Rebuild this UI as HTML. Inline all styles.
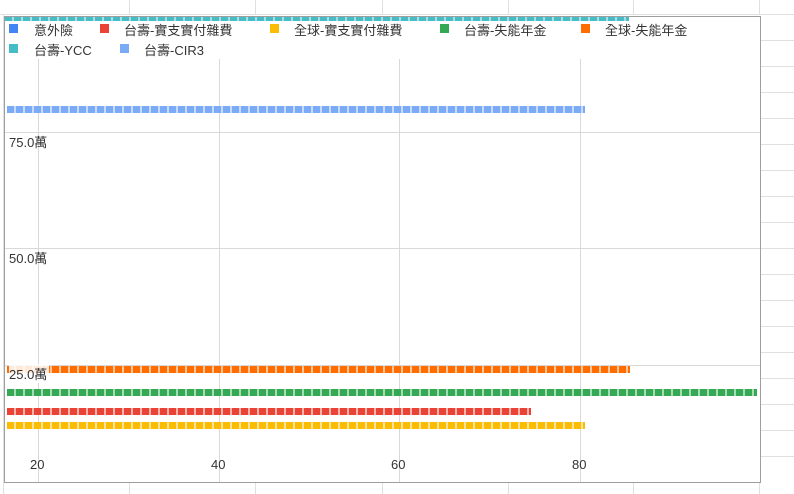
<!DOCTYPE html>
<html><head><meta charset="utf-8"><style>
body{margin:0;width:794px;height:494px;overflow:hidden;background:#fff;font-family:"Liberation Sans","Noto Sans CJK TC",sans-serif;position:relative}
.a{position:absolute}
.gv{position:absolute;width:1px;background:#e0e0e0}
.gh{position:absolute;height:1px;background:#e0e0e0}
.d{position:absolute;height:7px}
.t{position:absolute;font-size:13px;color:#333;white-space:nowrap}
.sq{position:absolute;width:9px;height:9px}
</style></head><body>
<div class="gh" style="left:0;top:14px;width:794px"></div>
<div class="gv" style="left:129px;top:0;height:14px"></div>
<div class="gv" style="left:255px;top:0;height:14px"></div>
<div class="gv" style="left:382px;top:0;height:14px"></div>
<div class="gv" style="left:508px;top:0;height:14px"></div>
<div class="gv" style="left:633px;top:0;height:14px"></div>
<div class="gv" style="left:759px;top:0;height:14px"></div>
<div class="gh" style="left:760px;top:40px;width:34px"></div>
<div class="gh" style="left:760px;top:66px;width:34px"></div>
<div class="gh" style="left:760px;top:92px;width:34px"></div>
<div class="gh" style="left:760px;top:118px;width:34px"></div>
<div class="gh" style="left:760px;top:144px;width:34px"></div>
<div class="gh" style="left:760px;top:170px;width:34px"></div>
<div class="gh" style="left:760px;top:196px;width:34px"></div>
<div class="gh" style="left:760px;top:222px;width:34px"></div>
<div class="gh" style="left:760px;top:248px;width:34px"></div>
<div class="gh" style="left:760px;top:274px;width:34px"></div>
<div class="gh" style="left:760px;top:300px;width:34px"></div>
<div class="gh" style="left:760px;top:326px;width:34px"></div>
<div class="gh" style="left:760px;top:352px;width:34px"></div>
<div class="gh" style="left:760px;top:378px;width:34px"></div>
<div class="gh" style="left:760px;top:404px;width:34px"></div>
<div class="gh" style="left:760px;top:430px;width:34px"></div>
<div class="gh" style="left:760px;top:456px;width:34px"></div>
<div class="gv" style="left:129px;top:483px;height:11px"></div>
<div class="gv" style="left:255px;top:483px;height:11px"></div>
<div class="gv" style="left:382px;top:483px;height:11px"></div>
<div class="gv" style="left:508px;top:483px;height:11px"></div>
<div class="gv" style="left:633px;top:483px;height:11px"></div>
<div class="gv" style="left:759px;top:483px;height:11px"></div>
<div class="gv" style="left:3px;top:14px;height:480px"></div>
<div class="a" style="left:4px;top:16px;width:755px;height:465px;border:1px solid #9e9e9e;background:#fff;overflow:hidden">
 <div class="gv" style="left:33px;top:0;height:465px;background:#d9d9d9"></div>
 <div class="gv" style="left:214px;top:0;height:465px;background:#d9d9d9"></div>
 <div class="gv" style="left:394px;top:0;height:465px;background:#d9d9d9"></div>
 <div class="gv" style="left:575px;top:0;height:465px;background:#d9d9d9"></div>
 <div class="gh" style="left:0;top:115px;width:755px;background:#d9d9d9"></div>
 <div class="gh" style="left:0;top:231px;width:755px;background:#d9d9d9"></div>
 <div class="gh" style="left:0;top:348px;width:755px;background:#d9d9d9"></div>
 <div style="position:absolute;left:0;top:4px;width:755px;height:38px;background:#fff"></div>
 <div class="d" style="left:0;top:-3px;width:624px;background:repeating-linear-gradient(90deg,#46bdc6 0 7px,#a8dde1 7px 9px)"></div>
 <div class="d" style="left:2px;top:89px;width:578px;background:repeating-linear-gradient(90deg,#7baaf7 0 7px,#c8dafb 7px 9px)"></div>
 <div class="d" style="left:2px;top:349px;width:623px;background:repeating-linear-gradient(90deg,#ff6d01 0 7px,#ffc49a 7px 9px)"></div>
 <div class="d" style="left:2px;top:372px;width:750px;background:repeating-linear-gradient(90deg,#34a853 0 7px,#a8dbb5 7px 9px)"></div>
 <div class="d" style="left:2px;top:391px;width:524px;background:repeating-linear-gradient(90deg,#ea4335 0 7px,#f7b4ae 7px 9px)"></div>
 <div class="d" style="left:2px;top:405px;width:578px;background:repeating-linear-gradient(90deg,#fbbc04 0 7px,#fde39a 7px 9px)"></div>
 <div class="t" style="left:4px;top:115px">75.0萬</div>
 <div class="t" style="left:4px;top:231px">50.0萬</div>
 <div class="t" style="left:4px;top:347px;background:rgba(255,255,255,.85);padding-right:2px">25.0萬</div>
 <div class="t" style="left:25px;top:440px">20</div>
 <div class="t" style="left:206px;top:440px">40</div>
 <div class="t" style="left:386px;top:440px">60</div>
 <div class="t" style="left:567px;top:440px">80</div>
 <div class="sq" style="left:4px;top:7px;background:#4285f4"></div><div class="t" style="left:29px;top:3px">意外險</div>
 <div class="sq" style="left:95px;top:7px;background:#ea4335"></div><div class="t" style="left:119px;top:3px">台壽-實支實付雜費</div>
 <div class="sq" style="left:265px;top:7px;background:#fbbc04"></div><div class="t" style="left:289px;top:3px">全球-實支實付雜費</div>
 <div class="sq" style="left:435px;top:7px;background:#34a853"></div><div class="t" style="left:459px;top:3px">台壽-失能年金</div>
 <div class="sq" style="left:576px;top:7px;background:#ff6d01"></div><div class="t" style="left:600px;top:3px">全球-失能年金</div>
 <div class="sq" style="left:4px;top:27px;background:#46bdc6"></div><div class="t" style="left:29px;top:23px">台壽-YCC</div>
 <div class="sq" style="left:115px;top:27px;background:#7baaf7"></div><div class="t" style="left:139px;top:23px">台壽-CIR3</div>
</div>
</body></html>
